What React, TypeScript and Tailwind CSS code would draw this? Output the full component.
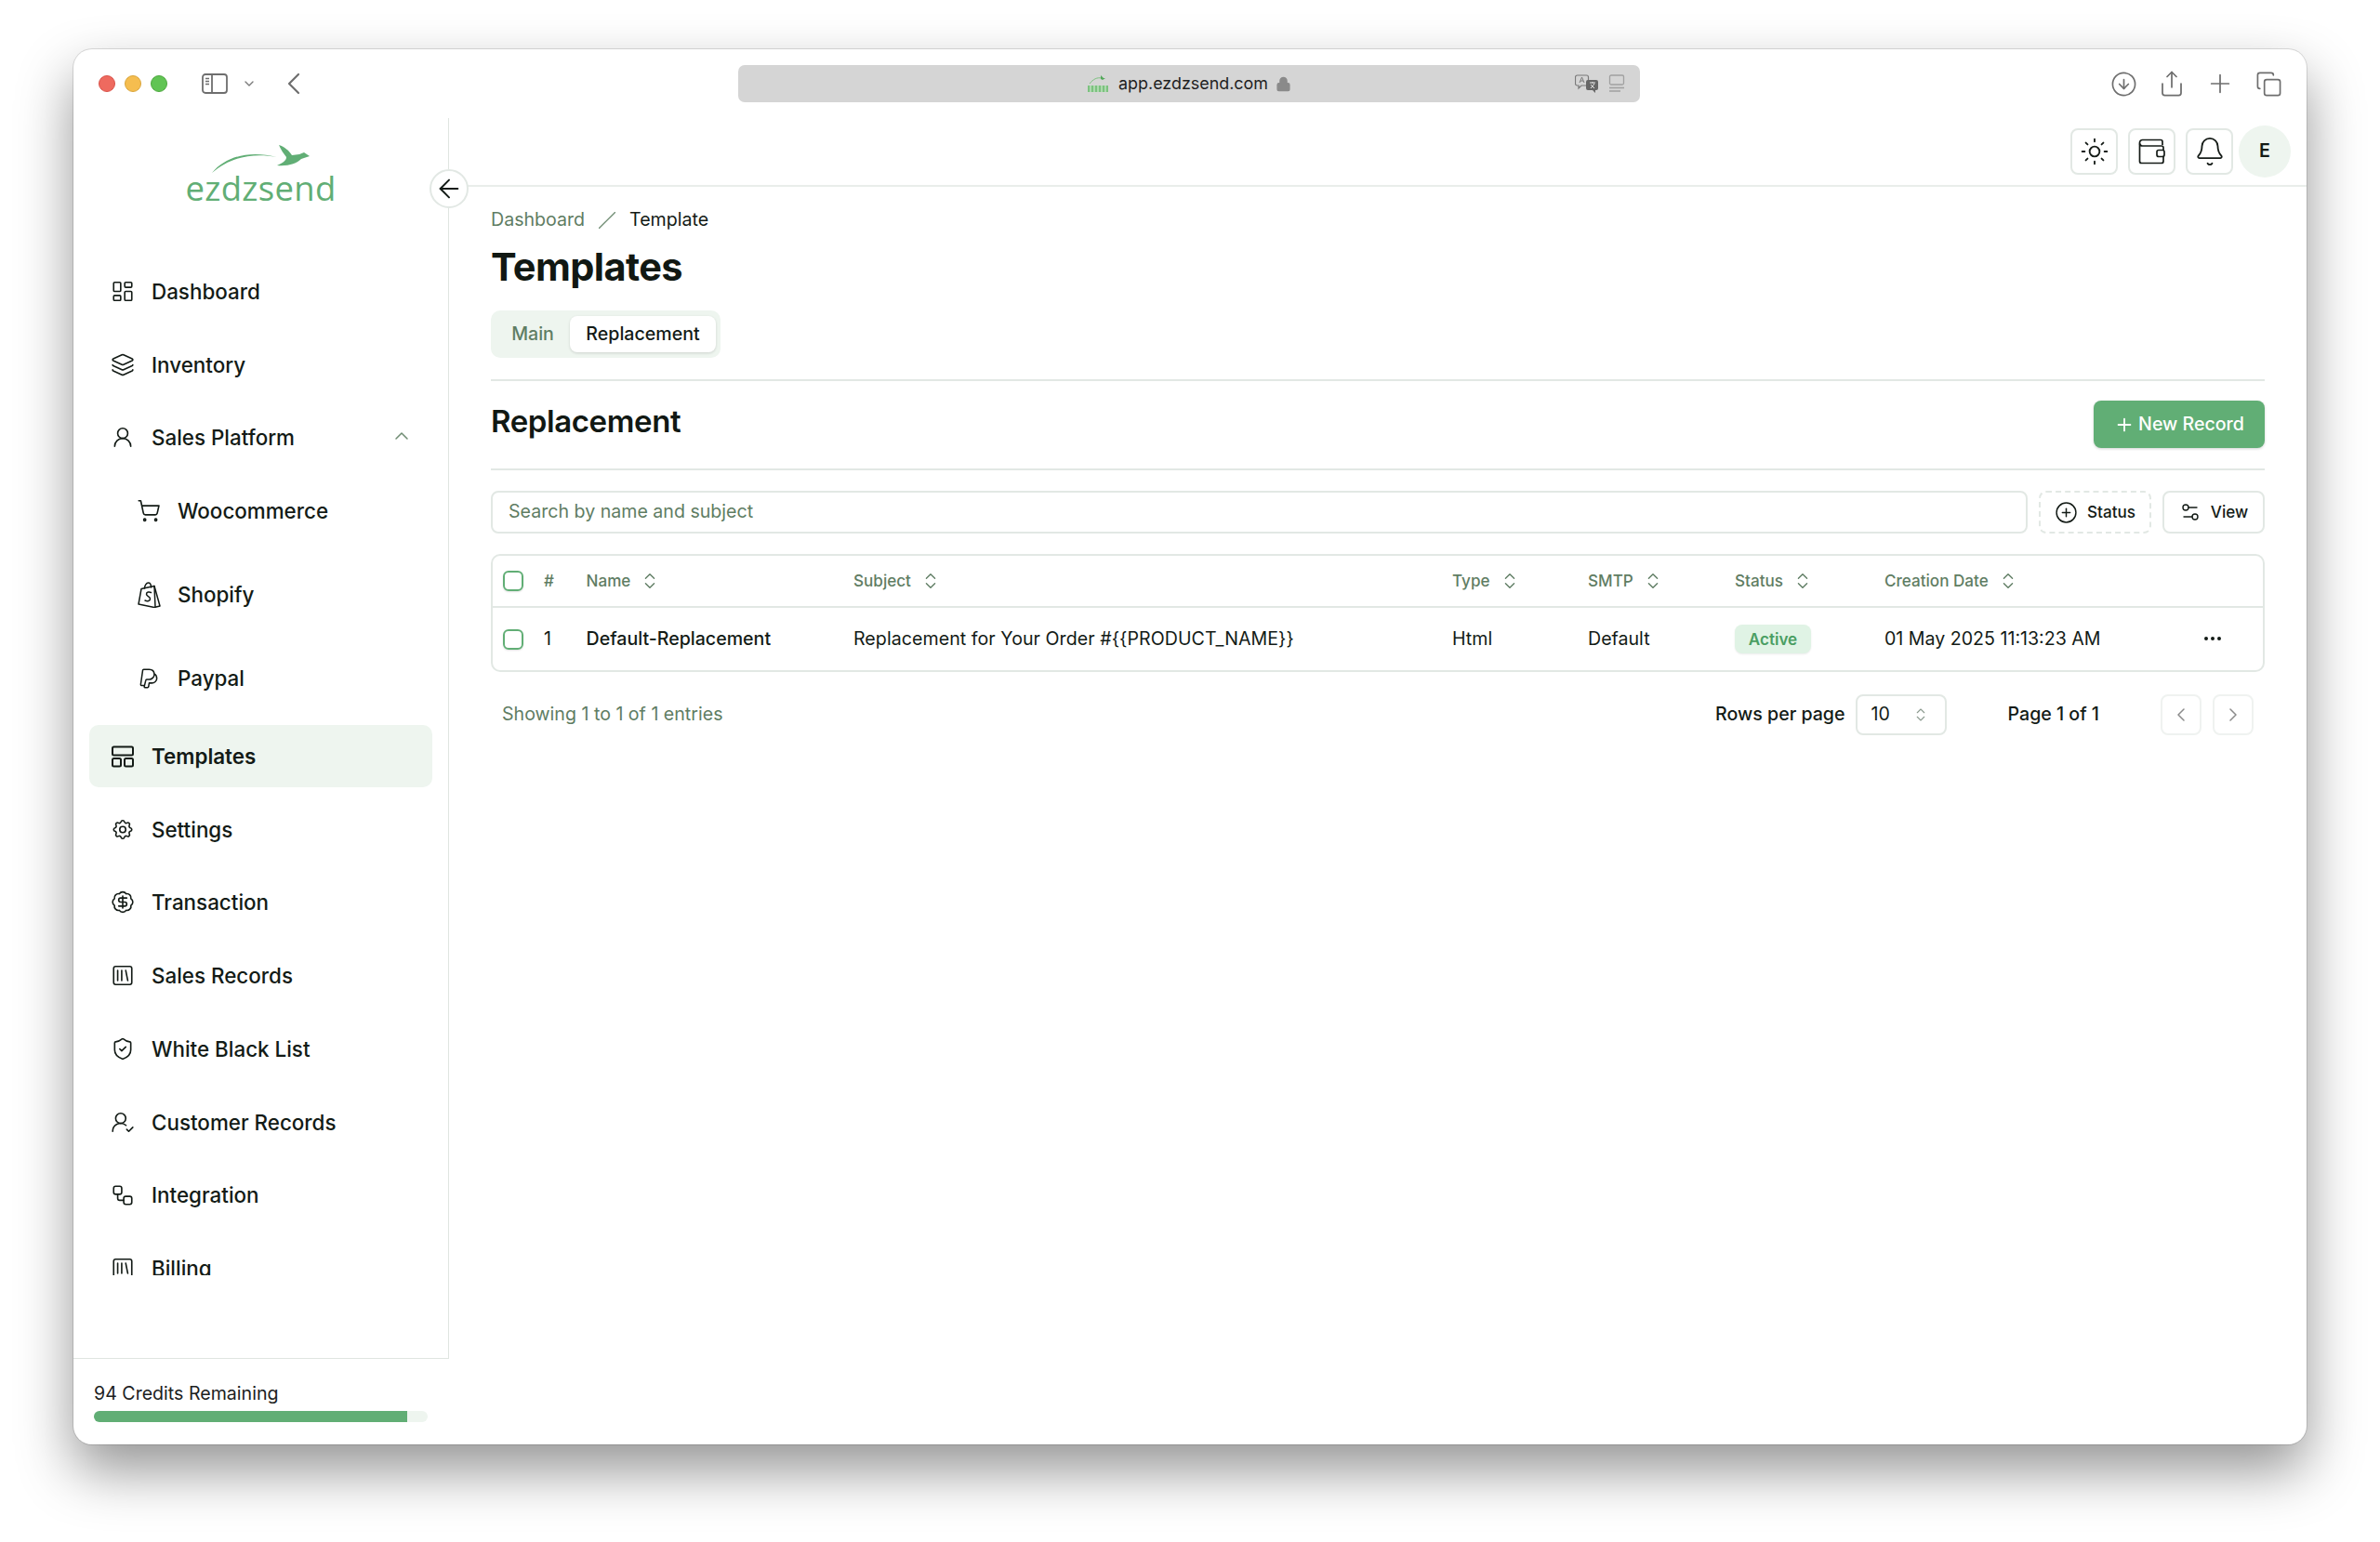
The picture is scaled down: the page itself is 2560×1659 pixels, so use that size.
import {
  ArrowLeft,
  BadgeDollarSign,
  Bell,
  ChevronDown,
  ChevronLeft,
  ChevronRight,
  ChevronUp,
  ChevronsUpDown,
  CircleArrowDown,
  CirclePlus,
  Copy,
  Ellipsis,
  Layers,
  LayoutDashboard,
  Lock,
  Plus,
  Settings2,
  Share,
  ShieldCheck,
  ShoppingCart,
  SquareLibrary,
  Sun,
  UserRound,
  UserRoundCheck,
  Workflow,
} from "lucide-react";
import { TbBrandPaypal, TbSettings } from "react-icons/tb";

const navIcon = { size: 33, strokeWidth: 1.5 };

function TemplatesIcon() {
  return (
    <svg width="24" height="24" viewBox="0 0 24 24" fill="none" stroke="currentColor" strokeWidth="2" strokeLinejoin="round">
      <rect x="1" y="1.5" width="22" height="9" rx="1.5" />
      <rect x="1" y="14" width="9" height="8.5" rx="1.5" />
      <rect x="14" y="14" width="9" height="8.5" rx="1.5" />
    </svg>
  );
}

function ShopifyIcon() {
  return (
    <svg width="26" height="28" viewBox="0 0 26 28" fill="none" stroke="currentColor" strokeWidth="1.5" strokeLinejoin="round" strokeLinecap="round">
      <path d="M2 24 5 7.5l14-3L25 26l-6 1.5z" />
      <path d="M19 4.5 20 27" />
      <path d="M8.5 7c0-3 2-6 4-6s3 2 3 5" />
      <path d="M15.5 11.5c-2-1.200-5-.5-5 1.800 0 2.400 4 2.400 4 5 0 2.400-3 3-5.500 1.700" />
    </svg>
  );
}

function WalletIcon() {
  return (
    <svg width="30" height="28" viewBox="0 0 30 28" fill="none" stroke="currentColor" strokeWidth="1.7" strokeLinejoin="round">
      <path d="M26 7V3.500A2 2 0 0 0 24 1.500H4.500A3 3 0 0 0 1.500 4.500v20a2 2 0 0 0 2 2H25a2 2 0 0 0 2-2V20" />
      <path d="M1.500 5.500a3 3 0 0 0 3 2.500H25a2 2 0 0 1 2 2v3" />
      <rect x="20" y="12.500" width="8" height="7" rx="2" />
    </svg>
  );
}

function SidebarToggleIcon() {
  return (
    <svg width="28" height="22" viewBox="0 0 28 22" fill="none" stroke="#6e6e6e" strokeWidth="1.800">
      <rect x="1" y="1" width="26" height="20" rx="3" />
      <path d="M11 1v20" />
      <path d="M4 5.500h4M4 8.500h4M4 11.500h4" strokeWidth="1.400" />
    </svg>
  );
}

function TranslateIcon() {
  return (
    <svg width="26" height="20" viewBox="0 0 26 20" fill="none">
      <path d="M2.500 1h10a2 2 0 0 1 2 2v7a2 2 0 0 1-2 2H7l-3 3v-3H2.500a2 2 0 0 1-2-2V3a2 2 0 0 1 2-2z" fill="#d5d5d5" stroke="#7a7a7a" strokeWidth="1.200" />
      <path d="m5 9 2.500-6L10 9M6 7h3" stroke="#7a7a7a" strokeWidth="1" />
      <path d="M14 6h9a2 2 0 0 1 2 2v7a2 2 0 0 1-2 2h-1v3l-3-3h-5a2 2 0 0 1-2-2V8a2 2 0 0 1 2-2z" fill="#666" />
      <path d="M16 9h6M19 8v1.500M17 15l4-5M17 11l4 4" stroke="#e5e5e5" strokeWidth="1" />
    </svg>
  );
}

function ReaderIcon() {
  return (
    <svg width="18" height="20" viewBox="0 0 18 20" fill="none" stroke="#a0a0a0" strokeWidth="1.300">
      <rect x="1.500" y="1" width="15" height="10" rx="1.500" />
      <path d="M1 14.500h16M1 18h12" strokeWidth="1.600" />
    </svg>
  );
}

function Favicon() {
  return (
    <svg width="24" height="20" viewBox="0 0 24 20" fill="none">
      <path d="M3 10C7 5 11 3 16 4" stroke="#7cc27f" strokeWidth="1" />
      <path d="M15 1l3 3 2 0-3 2-2-1z" fill="#52a85a" />
      <rect x="1" y="12" width="22" height="7" fill="#7cc27f" />
      <path d="M4 12v7M8 12v7M12 12v7M16 12v7M20 12v7" stroke="#e0efe0" strokeWidth="1" />
    </svg>
  );
}

function Logo() {
  return (
    <div className="flex h-[153px] flex-col items-center pt-[28px]">
      <svg width="157" height="32" viewBox="0 0 157 32" fill="#61ae75">
        <path d="M26 31C40 14 65 6 96 14 70 9 45 14 26 31Z" />
        <path d="M98 1C104 3 109 7 112 12L120 11 125 9 131 13 122 16C117 21 108 24 96 23 102 20 106 18 106 14 103 10 100 6 98 1Z" />
      </svg>
      <span className="font-['Open_Sans',sans-serif] text-[36.5px] leading-[30px] font-medium tracking-[0.3px] text-[#61ae75]">ezdzsend</span>
    </div>
  );
}

function NavItem({ icon, label, active, className }: { icon: React.ReactNode; label: string; active?: boolean; className?: string }) {
  return (
    <div
      className={`flex h-[67px] w-[369px] shrink-0 items-center gap-[18px] rounded-[10px] pl-[23px] text-[22.4px] ${
        active ? "bg-[#eef5ef] font-semibold" : "font-medium"
      } ${className ?? ""}`}
    >
      <span className="flex w-[26px] justify-center">{icon}</span>
      {label}
    </div>
  );
}

function SubItem({ icon, label, className }: { icon: React.ReactNode; label: string; className?: string }) {
  return (
    <div className={`flex h-[67px] w-[369px] shrink-0 items-center gap-[18px] pl-[51px] text-[22.4px] font-medium ${className ?? ""}`}>
      <span className="flex w-[26px] justify-center">{icon}</span>
      {label}
    </div>
  );
}

function Sidebar() {
  return (
    <aside className="flex w-[404px] shrink-0 flex-col">
      <div className="flex h-[1334px] flex-col border-r border-[#dfe5e1] pb-[89px]">
        <Logo />
        <nav className="flex flex-1 flex-col overflow-hidden pl-[17px] text-[#131b16]">
          <NavItem icon={<LayoutDashboard {...navIcon} />} label="Dashboard" />
          <NavItem icon={<Layers {...navIcon} />} label="Inventory" className="mt-[12px]" />
          <div className="relative mt-[11px]">
            <NavItem icon={<UserRound {...navIcon} />} label="Sales Platform" />
            <ChevronUp size={24} strokeWidth={1.5} className="absolute top-[20px] right-[38px] text-[#6f8c73]" />
          </div>
          <SubItem icon={<ShoppingCart {...navIcon} />} label="Woocommerce" className="mt-[12px]" />
          <SubItem icon={<ShopifyIcon />} label="Shopify" className="mt-[23px]" />
          <SubItem icon={<TbBrandPaypal size={34} strokeWidth={1.4} />} label="Paypal" className="mt-[23px]" />
          <NavItem icon={<TemplatesIcon />} label="Templates" active className="mt-[17px]" />
          <NavItem icon={<TbSettings size={33} strokeWidth={1.5} />} label="Settings" className="mt-[12px]" />
          <NavItem icon={<BadgeDollarSign {...navIcon} />} label="Transaction" className="mt-[11px]" />
          <NavItem icon={<SquareLibrary {...navIcon} />} label="Sales Records" className="mt-[12px]" />
          <NavItem icon={<ShieldCheck {...navIcon} />} label="White Black List" className="mt-[12px]" />
          <NavItem icon={<UserRoundCheck {...navIcon} />} label="Customer Records" className="mt-[12px]" />
          <NavItem icon={<Workflow size={32} strokeWidth={1.5} />} label="Integration" className="mt-[11px]" />
          <NavItem icon={<SquareLibrary {...navIcon} />} label="Billing" className="mt-[12px]" />
        </nav>
      </div>
      <div className="flex flex-1 flex-col border-t border-[#dfe5e1] px-[22px] pt-[24px]">
        <span className="text-[19.6px] leading-[26px] text-[#1c211e]">94 Credits Remaining</span>
        <div className="mt-[6px] h-[12px] w-[359px] overflow-hidden rounded-full bg-[#eef5ef]">
          <div className="h-full w-[94%] bg-[#61ae75]" />
        </div>
      </div>
    </aside>
  );
}

function ChromeBar() {
  return (
    <div className="flex h-[74px] shrink-0 items-center">
      <div className="flex w-[715px] items-center pl-[27px]">
        <span className="h-[18px] w-[18px] rounded-full border border-[#d9524a] bg-[#ee6a5f]" />
        <span className="ml-[10px] h-[18px] w-[18px] rounded-full border border-[#d9a63c] bg-[#f5bd4f]" />
        <span className="ml-[10px] h-[18px] w-[18px] rounded-full border border-[#4da83f] bg-[#61c454]" />
        <span className="ml-[37px]"><SidebarToggleIcon /></span>
        <ChevronDown size={16} className="ml-[15px] text-[#7a7a7a]" />
        <ChevronLeft size={40} strokeWidth={1.3} className="ml-[20px] text-[#6e6e6e]" />
      </div>
      <div className="relative flex h-[40px] w-[970px] items-center justify-center rounded-[7px] bg-[#d5d5d5] text-[#1f1f1f]">
        <Favicon />
        <span className="ml-[10px] text-[17.9px]">app.ezdzsend.com</span>
        <Lock size={17} fill="#8a8a8a" className="ml-[8px] text-[#8a8a8a]" />
        <div className="absolute top-[10px] right-[16px] flex items-center gap-[10px]">
          <TranslateIcon />
          <ReaderIcon />
        </div>
      </div>
      <div className="flex flex-1 items-center justify-end pr-[15px] text-[#6e6e6e]">
        <span className="flex w-[52px] justify-center"><CircleArrowDown size={29} strokeWidth={1.4} /></span>
        <span className="flex w-[52px] justify-center"><Share size={30} strokeWidth={1.4} /></span>
        <span className="flex w-[52px] justify-center"><Plus size={32} strokeWidth={1.3} /></span>
        <span className="flex w-[52px] justify-center"><Copy size={29} strokeWidth={1.4} /></span>
      </div>
    </div>
  );
}

function IconButton({ children }: { children: React.ReactNode }) {
  return (
    <div className="flex h-[50px] w-[51px] items-center justify-center rounded-[8px] border-2 border-[#e2e8e4] text-[#161c18]">{children}</div>
  );
}

function TopBar() {
  return (
    <div className="flex h-[74px] shrink-0 items-center justify-end gap-[11px] border-b-2 border-[#e9edea] pr-[17px]">
      <IconButton><Sun size={32} strokeWidth={1.4} /></IconButton>
      <IconButton><WalletIcon /></IconButton>
      <IconButton><Bell size={34} strokeWidth={1.3} /></IconButton>
      <div className="ml-[-5px] flex h-[56px] w-[56px] items-center justify-center rounded-full bg-[#eef5ef] text-[19.6px] font-semibold text-[#131b16]">E</div>
    </div>
  );
}

function SortHead({ label }: { label: string }) {
  return (
    <div className="flex items-center gap-[10px]">
      <span>{label}</span>
      <ChevronsUpDown size={22} strokeWidth={1.5} />
    </div>
  );
}

function Checkbox() {
  return <span className="block h-[22px] w-[22px] rounded-[6px] border-2 border-[#61ae75] shadow-[0_1px_2px_rgba(0,0,0,0.12)]" />;
}

function RecordsTable() {
  const cols = "grid grid-cols-[55px_45.500px_287.500px_644px_146px_158px_161px_1fr] items-center";
  return (
    <div className="mt-[22px] h-[127px] rounded-[10px] border-2 border-[#e2e8e4]">
      <div className={`${cols} h-[56px] border-b-2 border-[#e2e8e4] text-[17.1px] font-medium text-[#5f7d63]`}>
        <div className="pl-[11px]"><Checkbox /></div>
        <div>#</div>
        <SortHead label="Name" />
        <SortHead label="Subject" />
        <SortHead label="Type" />
        <SortHead label="SMTP" />
        <SortHead label="Status" />
        <SortHead label="Creation Date" />
      </div>
      <div className={`${cols} h-[67px] text-[19.6px] text-[#131b16]`}>
        <div className="pl-[11px]"><Checkbox /></div>
        <div>1</div>
        <div className="font-[550]">Default-Replacement</div>
        <div className="tracking-[0.05px]">Replacement for Your Order #{"{{PRODUCT_NAME}}"}</div>
        <div>Html</div>
        <div>Default</div>
        <div>
          <span className="inline-flex h-[31px] w-[82px] items-center justify-center rounded-[8px] bg-[#e0f3e5] text-[17.1px] font-semibold text-[#4a9e63] shadow-[0_1px_2px_rgba(0,0,0,0.08)]">Active</span>
        </div>
        <div className="flex items-center justify-between pr-[42px]">
          <span>01 May 2025 11:13:23 AM</span>
          <Ellipsis size={24} />
        </div>
      </div>
    </div>
  );
}

function Pagination() {
  return (
    <div className="mt-[24px] flex h-[44px] items-center px-[12px] text-[19.6px]">
      <span className="text-[#5f7d63]">Showing 1 to 1 of 1 entries</span>
      <span className="ml-auto font-medium text-[#131b16]">Rows per page</span>
      <div className="ml-[11px] flex h-[44px] w-[98px] items-center justify-between rounded-[8px] border-2 border-[#e2e8e4] pr-[17px] pl-[15px] text-[#131b16]">
        10
        <ChevronsUpDown size={18} strokeWidth={1.5} className="text-[#8c9a8f]" />
      </div>
      <span className="ml-[66px] font-medium text-[#131b16]">Page 1 of 1</span>
      <div className="ml-[66px] flex h-[44px] w-[44px] items-center justify-center rounded-[8px] border-2 border-[#eff2f0] text-[#8b8b8b]"><ChevronLeft size={24} strokeWidth={1.5} /></div>
      <div className="ml-[12px] flex h-[44px] w-[44px] items-center justify-center rounded-[8px] border-2 border-[#eff2f0] text-[#8b8b8b]"><ChevronRight size={24} strokeWidth={1.5} /></div>
    </div>
  );
}

function Content() {
  return (
    <div className="flex flex-col px-[45px] pt-[22px]">
      <div className="flex h-[28px] items-center text-[19.6px]">
        <span className="text-[#5f7d63]">Dashboard</span>
        <svg width="18" height="18" viewBox="0 0 18 18" className="mx-[15px]" stroke="#6f8c73" strokeWidth="1.300"><path d="M0 18 18 0" /></svg>
        <span className="text-[#131b16]">Template</span>
      </div>
      <h1 className="mt-[8px] text-[41.5px] leading-[56px] font-bold tracking-[-0.6px] text-[#111813]">Templates</h1>
      <div className="mt-[19px] flex h-[51px] w-[247px] items-center rounded-[10px] bg-[#eef5ef] p-[5px] text-[19.6px]">
        <span className="flex-1 text-center font-medium text-[#5f7d63]">Main</span>
        <span className="flex h-[39px] w-[157px] items-center justify-center rounded-[8px] bg-white font-medium text-[#131b16] shadow-[0_1px_3px_rgba(0,0,0,0.14)]">Replacement</span>
      </div>
      <div className="mt-[23px] flex items-start justify-between border-y-2 border-[#e2e8e4] pt-[21px] pb-[22px]">
        <h2 className="text-[33px] leading-[44px] font-semibold tracking-[-0.4px] text-[#111813]">Replacement</h2>
        <div className="flex h-[51px] w-[184px] items-center justify-center rounded-[8px] bg-[#61ae75] text-[19.6px] font-medium text-white shadow-[0_1px_3px_rgba(0,0,0,0.18)]">
          <Plus size={22} strokeWidth={2} className="mr-[4px]" />
          New Record
        </div>
      </div>
      <div className="mt-[22px] flex h-[46px] gap-[12px]">
        <div className="flex flex-1 items-center rounded-[8px] border-2 border-[#e2e8e4] pl-[17px] text-[19.6px] text-[#5f7d63]">Search by name and subject</div>
        <div className="flex w-[121px] items-center justify-center gap-[10px] rounded-[8px] border-2 border-dashed border-[#e2e8e4] text-[17.1px] font-medium text-[#131b16]">
          <CirclePlus size={25} strokeWidth={1.4} />
          Status
        </div>
        <div className="flex w-[110px] items-center justify-center gap-[10px] rounded-[8px] border-2 border-[#e2e8e4] text-[17.1px] font-medium text-[#131b16]">
          <Settings2 size={24} strokeWidth={1.4} />
          View
        </div>
      </div>
      <RecordsTable />
      <Pagination />
    </div>
  );
}

export default function App() {
  return (
    <div className="h-[1659px] overflow-hidden bg-white pt-[53px] pl-[79px] font-[Inter,sans-serif]">
      <div className="flex h-[1501px] w-[2402px] flex-col rounded-[20px] bg-white shadow-[0_0_0_1px_rgba(0,0,0,0.12),0_28px_60px_rgba(0,0,0,0.42)]">
        <ChromeBar />
        <div className="relative flex min-h-0 flex-1">
          <Sidebar />
          <main className="flex min-w-0 flex-1 flex-col">
            <TopBar />
            <Content />
          </main>
          <div className="absolute top-[55px] left-[383px] flex h-[42px] w-[42px] items-center justify-center rounded-full border-2 border-[#e2e8e4] bg-white text-[#131b16]">
            <ArrowLeft size={32} strokeWidth={1.5} />
          </div>
        </div>
      </div>
    </div>
  );
}
